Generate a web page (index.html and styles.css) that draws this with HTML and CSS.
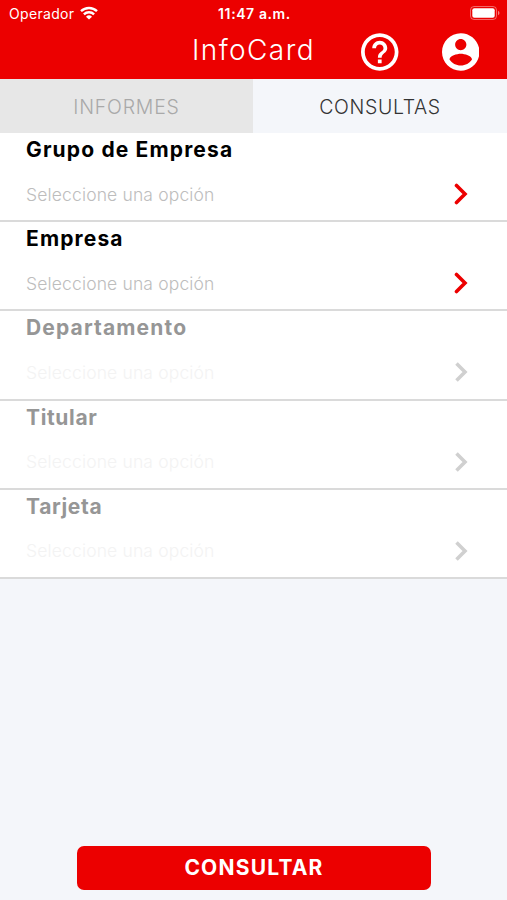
FILE: index.html
```html
<!DOCTYPE html>
<html lang="es">
<head>
  <meta charset="UTF-8">
  <meta name="viewport" content="width=device-width, initial-scale=1">
  <title>InfoCard</title>
  <link rel="stylesheet" href="styles.css">
</head>
<body>
  <header class="header">
    <div class="status">
      <div class="carrier">
        <span class="operador">Operador</span>
        <svg class="wifi" viewBox="0 0 18 14">
          <path d="M1 5.2a11.5 11.5 0 0 1 16 0M3.9 8.3a7.3 7.3 0 0 1 10.2 0" fill="none" stroke="#fff" stroke-width="2.4"/>
          <path d="M9 13.6L6 10.8a4.3 4.3 0 0 1 6 0z" fill="#fff"/>
        </svg>
      </div>
      <span class="time">11:47 a.m.</span>
      <svg class="battery" viewBox="0 0 30 14">
        <rect x=".5" y=".5" width="26" height="13" rx="3.5" fill="none" stroke="#fff" stroke-opacity=".4"/>
        <rect x="2.3" y="2.3" width="22.4" height="9.4" rx="2" fill="#fff"/>
        <path d="M28 4.8c2 .8 2 3.6 0 4.400z" fill="#fff" fill-opacity=".5"/>
      </svg>
    </div>
    <div class="navbar">
      <h1 class="title">InfoCard</h1>
      <div class="actions">
        <svg class="icon" viewBox="2 2 20 20">
          <path d="M11 18h2v-2h-2v2zm1-16C6.480 2 2 6.480 2 12s4.480 10 10 10 10-4.480 10-10S17.520 2 12 2zm0 18c-4.410 0-8-3.590-8-8s3.590-8 8-8 8 3.590 8 8-3.590 8-8 8zm0-14c-2.210 0-4 1.790-4 4h2c0-1.100.9-2 2-2s2 .9 2 2c0 2-3 1.750-3 5h2c0-2.250 3-2.500 3-5 0-2.210-1.790-4-4-4z"/>
        </svg>
        <svg class="icon" viewBox="2 2 20 20">
          <path d="M12 2C6.480 2 2 6.480 2 12s4.480 10 10 10 10-4.480 10-10S17.520 2 12 2zm0 3c1.660 0 3 1.340 3 3s-1.340 3-3 3-3-1.340-3-3 1.340-3 3-3zm0 14.200c-2.500 0-4.710-1.280-6-3.220.03-1.990 4-3.080 6-3.080 1.990 0 5.970 1.090 6 3.080-1.290 1.940-3.500 3.220-6 3.220z"/>
        </svg>
      </div>
    </div>
  </header>

  <nav class="tabs">
    <div class="tab">INFORMES</div>
    <div class="tab active">CONSULTAS</div>
  </nav>

  <main class="lista">
    <div class="fila">
      <h2 class="label">Grupo de Empresa</h2>
      <div class="opcion">
        <span>Seleccione una opción</span>
        <svg class="flecha" viewBox="0 0 14 22"><path d="M2.500 2.500l8.500 8.500-8.500 8.500"/></svg>
      </div>
    </div>
    <div class="fila">
      <h2 class="label">Empresa</h2>
      <div class="opcion">
        <span>Seleccione una opción</span>
        <svg class="flecha" viewBox="0 0 14 22"><path d="M2.500 2.500l8.500 8.500-8.500 8.500"/></svg>
      </div>
    </div>
    <div class="fila disabled">
      <h2 class="label">Departamento</h2>
      <div class="opcion">
        <span>Seleccione una opción</span>
        <svg class="flecha" viewBox="0 0 14 22"><path d="M2.500 2.500l8.500 8.500-8.500 8.500"/></svg>
      </div>
    </div>
    <div class="fila disabled">
      <h2 class="label corto">Titular</h2>
      <div class="opcion">
        <span>Seleccione una opción</span>
        <svg class="flecha" viewBox="0 0 14 22"><path d="M2.500 2.500l8.500 8.500-8.500 8.500"/></svg>
      </div>
    </div>
    <div class="fila disabled">
      <h2 class="label corto">Tarjeta</h2>
      <div class="opcion">
        <span>Seleccione una opción</span>
        <svg class="flecha" viewBox="0 0 14 22"><path d="M2.500 2.500l8.500 8.500-8.500 8.500"/></svg>
      </div>
    </div>
  </main>

  <footer class="footer">
    <button class="consultar" type="button">CONSULTAR</button>
  </footer>
</body>
</html>
```
FILE: styles.css
```css
*{
  margin:0;
  padding:0;
  box-sizing:border-box;
}
body{
  height:900px;
  display:flex;
  flex-direction:column;
  background:#f4f6fa;
  font-family:Inter, "Liberation Sans", sans-serif;
  overflow:hidden;
}
.header{
  height:79px;
  background:#ec0000;
  color:#fff;
}
.status{
  height:27px;
  display:grid;
  grid-template-columns:1fr auto 1fr;
  align-items:center;
  padding:0 7px 0 9px;
  font-size:14px;
}
.carrier{
  display:flex;
  align-items:center;
  gap:6px;
}
.operador{
  letter-spacing:.33px;
}
.wifi{
  width:18px;
  height:14px;
  margin-bottom:2px;
}
.time{
  font-weight:600;
  letter-spacing:.6px;
}
.battery{
  width:30px;
  height:14px;
  margin-bottom:1px;
  justify-self:end;
}
.navbar{
  height:50px;
  display:grid;
  grid-template-columns:1fr auto 1fr;
  align-items:center;
  padding:0 28px;
}
.title{
  grid-column:2;
  padding-bottom:4px;
  font-size:28px;
  font-weight:300;
  line-height:46px;
  letter-spacing:1.4px;
}
.actions{
  display:flex;
  justify-content:flex-end;
  gap:43px;
}
.icon{
  width:37.5px;
  height:38px;
  fill:#fff;
}
.tabs{
  height:54px;
  display:grid;
  grid-template-columns:253px 1fr;
}
.tab{
  padding-top:1px;
  display:flex;
  align-items:center;
  justify-content:center;
  background:#e7e7e7;
  color:#a9a9a9;
  font-size:19.5px;
  font-weight:300;
  letter-spacing:.8px;
}
.tab.active{
  background:#f4f6fa;
  color:#333;
  letter-spacing:.65px;
}
.fila{
  height:89.2px;
  padding:3px 39px 0 26px;
  background:#fff;
  border-bottom:2px solid #dadada;
}
.label{
  font-size:21px;
  font-weight:700;
  line-height:27px;
  letter-spacing:1.15px;
  color:#000;
}
.label.corto{
  letter-spacing:.65px;
}
.opcion{
  height:26px;
  margin-top:18px;
  display:flex;
  align-items:center;
  justify-content:space-between;
  color:#bdbdbd;
  font-size:17.5px;
  font-weight:300;
  letter-spacing:.15px;
}
.flecha{
  width:14px;
  height:22px;
  fill:none;
  stroke:#ec0000;
  stroke-width:3.6;
  stroke-linecap:round;
}
.disabled .label{
  color:#969696;
}
.disabled .opcion{
  color:#f3f3f3;
}
.disabled .flecha{
  stroke:#d0d0d0;
  stroke-linecap:butt;
}
.footer{
  margin-top:auto;
  padding:0 76px 10px 77px;
}
.consultar{
  width:100%;
  height:44px;
  padding-bottom:2px;
  display:block;
  border:none;
  border-radius:7px;
  background:#ec0000;
  color:#fff;
  font-family:inherit;
  font-size:21px;
  font-weight:700;
  letter-spacing:1.2px;
}
```
